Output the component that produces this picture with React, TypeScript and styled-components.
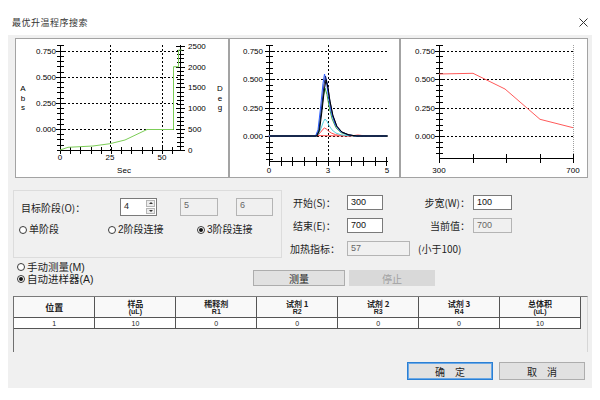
import React from 'react';
import styled, { createGlobalStyle } from 'styled-components';

const GlobalStyle = createGlobalStyle`
  html, body {
    margin: 0;
    padding: 0;
    background: #fff;
  }
  body {
    font-family: "Noto Sans CJK SC", "Liberation Sans", sans-serif;
    color: #1e1e1e;
  }
`;

const Window = styled.div`
    width: 600px;
    height: 400px;
    background: #fff;
    overflow: hidden;
`;

const TitleBar = styled.div`
    height: 35px;
    box-sizing: border-box;
    padding: 10px 12px 0 12px;
    display: flex;
    align-items: center;
    justify-content: space-between;
`;

const Title = styled.span`
    font-size: 9px;
    letter-spacing: 0.5px;
    color: #333;
`;

const Body = styled.div`
    margin: 0 8px;
    height: 353px;
    box-sizing: border-box;
    padding: 3px 4px 0 5px;
    background: #f0f0f0;
    display: flex;
    flex-direction: column;
`;

const ChartRow = styled.div`
    display: flex;
    margin-left: 2px;
    height: 140px;
`;

const Panel = styled.div<{ $w: number }>`
    width: ${p => p.$w}px;
    height: 140px;
    box-sizing: border-box;
    border: 1px solid #a3a3a3;
    background: #fff;
    svg { display: block; }
`;

const TopRow = styled.div`
    display: flex;
`;

const GroupBox = styled.div`
    margin-top: 12px;
    width: 269px;
    height: 68px;
    box-sizing: border-box;
    border: 1px solid #dcdcdc;
    padding: 7px 0 0 6px;
`;

const FieldRow = styled.div`
    display: flex;
    align-items: center;
    height: 18px;
`;

const Label = styled.span<{ $w?: number; $right?: boolean; $pad?: number }>`
    font-size: 10px;
    white-space: nowrap;
    ${p => p.$w ? `width: ${p.$w}px; flex: none;` : ''}
    ${p => p.$right ? 'text-align: right;' : ''}
    padding-left: ${p => p.$pad || 0}px;
    box-sizing: border-box;
`;

const SpinBox = styled.div`
    display: flex;
    width: 37px;
    height: 18px;
    box-sizing: border-box;
    border: 1px solid #7a7a7a;
    background: #fff;
`;

const SpinValue = styled.span`
    flex: 1;
    font: 9px "Liberation Sans", sans-serif;
    padding: 2px 0 0 3px;
`;

const SpinButtons = styled.div`
    width: 9px;
    display: flex;
    flex-direction: column;
    gap: 1px;
    padding: 1px 1px 1px 0;
`;

const SpinArrow = styled.div<{ $down?: boolean }>`
    flex: 1;
    display: flex;
    align-items: center;
    justify-content: center;
    background: #ececec;
    border: 1px solid #b5b5b5;
    &::after {
        content: '';
        border-left: 2px solid transparent;
        border-right: 2px solid transparent;
        ${p => p.$down ? 'border-top: 2px solid #333;' : 'border-bottom: 2px solid #333;'}
    }
`;

const Box = styled.div<{ $w: number; $disabled?: boolean; $h?: number }>`
    width: ${p => p.$w}px;
    height: ${p => p.$h || 15}px;
    flex: none;
    box-sizing: border-box;
    border: 1px solid ${p => p.$disabled ? '#b4b4b4' : '#7a7a7a'};
    background: ${p => p.$disabled ? '#f0f0f0' : '#fff'};
    color: ${p => p.$disabled ? '#666' : '#111'};
    font: 9px "Liberation Sans", sans-serif;
    padding: 1px 0 0 3px;
`;

const RadioRow = styled.div`
    display: flex;
    margin-top: 8px;
    margin-left: -1px;
`;

const RadioItem = styled.label<{ $w?: number; $size?: number }>`
    display: flex;
    align-items: center;
    gap: 2px;
    font-family: "Liberation Sans", "Noto Sans CJK SC", sans-serif;
    font-size: ${p => p.$size || 10}px;
    line-height: 12px;
    height: 12px;
    ${p => p.$w ? `width: ${p.$w}px;` : ''}
    white-space: nowrap;
`;

const RadioCircle = styled.span<{ $checked?: boolean }>`
    width: 8px;
    height: 8px;
    box-sizing: border-box;
    border: 1px solid #3a3a3a;
    border-radius: 50%;
    background: #fff;
    display: inline-flex;
    align-items: center;
    justify-content: center;
    &::after {
        content: '';
        display: ${p => p.$checked ? 'block' : 'none'};
        width: 4px;
        height: 4px;
        border-radius: 50%;
        background: #111;
    }
`;

const RightForm = styled.div`
    margin-left: 8px;
    padding-top: 17px;
    display: flex;
    flex-direction: column;
    gap: 8px;
`;

const FormRow = styled.div`
    display: flex;
    align-items: center;
    height: 15px;
`;

const LowerRow = styled.div`
    display: flex;
    align-items: flex-start;
`;

const ModeColumn = styled.div`
    width: 240px;
    padding: 3px 0 0 4px;
    box-sizing: border-box;
    display: flex;
    flex-direction: column;
`;

const ActionButtons = styled.div`
    margin-top: 12px;
    display: flex;
    gap: 4px;
`;

const Button = styled.div<{ $w: number; $h?: number; $disabled?: boolean; $focused?: boolean; $spread?: boolean }>`
    width: ${p => p.$w}px;
    height: ${p => p.$h || 16}px;
    box-sizing: border-box;
    display: flex;
    align-items: center;
    justify-content: center;
    font-size: 10px;
    white-space: pre;
    ${p => p.$spread ? 'letter-spacing: 4px; padding-left: 4px;' : ''}
    background: ${p => p.$disabled ? '#d9d9d9' : '#e1e1e1'};
    color: ${p => p.$disabled ? '#a0a0a0' : '#1e1e1e'};
    border: 1px solid ${p => p.$focused ? '#2a7fd4' : p.$disabled ? '#d9d9d9' : '#adadad'};
    ${p => p.$focused ? 'box-shadow: inset 0 0 0 1px #6aa8e6;' : ''}
`;

const GridBox = styled.div`
    margin-top: 10px;
    height: 56px;
    box-sizing: border-box;
    border-left: 1px solid #6f6f6f;
    border-top: 1px solid #7a7a7a;
    border-right: 1px solid #d6d6d6;
`;

const Table = styled.table`
    border-collapse: collapse;
    table-layout: fixed;
    width: 567px;
`;

const HeadCell = styled.th`
    height: 20px;
    padding: 0;
    border: 1px solid #555;
    border-top: none;
    background: #f9f9f9;
    font-weight: bold;
    text-align: center;
    vertical-align: middle;
    &:first-child { border-left: none; }
`;

const HeadMain = styled.div<{ $big?: boolean }>`
    font-size: ${p => p.$big ? 9 : 8}px;
    line-height: 9px;
    color: #222;
`;

const HeadSub = styled.div`
    font: bold 7px "Liberation Sans", sans-serif;
    line-height: 8px;
    color: #222;
`;

const DataCell = styled.td`
    height: 10px;
    padding: 0;
    border: 1px solid #555;
    background: #fff;
    text-align: center;
    font: 7px "Liberation Sans", sans-serif;
    line-height: 9px;
    color: #222;
    &:first-child { border-left: none; }
`;

const BottomBar = styled.div`
    flex: 1;
    display: flex;
    justify-content: flex-end;
    align-items: flex-start;
    gap: 6px;
    padding: 10px 3px 0 0;
`;

const c = (v: number) => Math.round(v) + 0.5;

function yTicks(x: number, first: number, step: number, top: number, bottom: number) {
    const out: React.ReactNode[] = [];
    const k0 = Math.ceil((top - first) / step - 0.01);
    for (let i = k0; first + i * step <= bottom + 0.01; i++) {
        const y = c(first + i * step);
        const l = ((i % 5) + 5) % 5 === 0 ? 4 : 3;
        out.push(<line key={'y' + i} x1={x - l} x2={x + l + 1} y1={y} y2={y} />);
    }
    return out;
}

function xTicks(y: number, first: number, step: number, right: number, len = 3) {
    const out: React.ReactNode[] = [];
    for (let i = 0; first + i * step <= right + 0.01; i++) {
        const x = c(first + i * step);
        out.push(<line key={'x' + i} x1={x} x2={x} y1={y - len} y2={y + len + 1} />);
    }
    return out;
}

const AXIS_FONT = { fontFamily: '"Liberation Sans", sans-serif', fontSize: 8, fill: '#000' };

function Gridlines({ ys, xs, left, right, top, bottom }: { ys: number[]; xs: number[]; left: number; right: number; top: number; bottom: number }) {
    return (
        <g stroke="#000" strokeDasharray="2,2" strokeWidth={1}>
            {ys.map(y => <line key={'h' + y} x1={left} x2={right} y1={c(y)} y2={c(y)} />)}
            {xs.map(x => <line key={'v' + x} x1={c(x)} x2={c(x)} y1={top} y2={bottom} />)}
        </g>
    );
}

const absLabels = ['0.750', '0.500', '0.250', '0.000'];

function HeatChart() {
    const ys = [11.7, 37.8, 63.9, 90];
    const right = ['2500', '2000', '1500', '1000', '500', '0'];
    const green = [[44, 111], [52, 108.3], [77, 107], [94, 104.7], [109, 101], [131, 90.5], [157.5, 90.5], [157.5, 27.7], [162.5, 27.7], [162.5, 11], [166, 11]];
    return (
        <svg width={212} height={138}>
            <Gridlines ys={ys} xs={[94, 146]} left={44} right={164} top={6} bottom={111} />
            <g stroke="#000" strokeWidth={1}>
                <line x1={44.5} x2={44.5} y1={6} y2={112} />
                <line x1={164.5} x2={164.5} y1={6} y2={112} />
                <line x1={44} x2={165} y1={111.5} y2={111.5} />
                {yTicks(44, 11.7, 5.22, 6, 111)}
                {yTicks(164, 6.7, 4.17, 6, 111)}
                {xTicks(111, 44, 10.2, 164)}
            </g>
            <polyline points={green.map(p => p.join(',')).join(' ')} fill="none" stroke="#7ccd57" strokeWidth={1} />
            {absLabels.map((t, i) => <text key={t} x={40} y={ys[i] + 3} textAnchor="end" {...AXIS_FONT}>{t}</text>)}
            {right.map((t, i) => <text key={t} x={172} y={6.7 + i * 20.86 + 3} {...AXIS_FONT}>{t}</text>)}
            {['A', 'b', 's'].map((t, i) => <text key={t} x={7} y={52 + i * 9.5} textAnchor="middle" {...AXIS_FONT}>{t}</text>)}
            {['D', 'e', 'g'].map((t, i) => <text key={t} x={204} y={52 + i * 9.5} textAnchor="middle" {...AXIS_FONT}>{t}</text>)}
            <text x={44} y={121} textAnchor="middle" {...AXIS_FONT}>0</text>
            <text x={94} y={121} textAnchor="middle" {...AXIS_FONT}>25</text>
            <text x={146} y={121} textAnchor="middle" {...AXIS_FONT}>50</text>
            <text x={108} y={134} textAnchor="middle" {...AXIS_FONT}>Sec</text>
        </svg>
    );
}

function peak(h: number, shift = 0) {
    const b = 97;
    const pts: number[][] = [
        [39, b], [86, b], [88.5, b - h * 0.1], [91, b - h * 0.45], [93.5, b - h * 0.85], [95, b - h],
        [97, b - h * 0.86], [99, b - h * 0.62], [102, b - h * 0.36], [106, b - h * 0.17], [111, b - h * 0.07],
        [118, b - h * 0.02], [126, b], [157, b],
    ];
    return pts.map(([x, y]) => `${x + shift},${y}`).join(' ');
}

const peaks = [
    { color: '#ff4b4b', h: 8, s: -0.5 },
    { color: '#53d3e0', h: 17, s: 0 },
    { color: '#3fae3f', h: 48, s: 0 },
    { color: '#2a5cff', h: 62, s: -0.5 },
    { color: '#10207a', h: 60, s: 0.5 },
    { color: '#000000', h: 56, s: 1 },
];

function PeakChart() {
    const ys = [11.7, 40.1, 68.5, 97];
    return (
        <svg width={169} height={138}>
            <Gridlines ys={ys} xs={[98]} left={39} right={157} top={6} bottom={122} />
            <g stroke="#000" strokeWidth={1}>
                <line x1={39.5} x2={39.5} y1={6} y2={123} />
                <line x1={39} x2={158} y1={122.5} y2={122.5} />
                {yTicks(39, 11.7, 5.68, 6, 122)}
                {xTicks(122, 39, 11.74, 157, 4)}
            </g>
            <polyline points="39,97 60,97.5 80,96.5 120,97 128,96 140,97.5 150,96.5 157,97" fill="none" stroke="#ff4b4b" strokeWidth={1} />
            {peaks.map(p => (
                <polyline key={p.color} points={peak(p.h, p.s)} fill="none" stroke={p.color} strokeWidth={1} />
            ))}
            {absLabels.map((t, i) => <text key={t} x={33} y={ys[i] + 3} textAnchor="end" {...AXIS_FONT}>{t}</text>)}
            <text x={39} y={134} textAnchor="middle" {...AXIS_FONT}>0</text>
            <text x={98} y={134} textAnchor="middle" {...AXIS_FONT}>3</text>
            <text x={157} y={134} textAnchor="middle" {...AXIS_FONT}>5</text>
        </svg>
    );
}

function IndexChart() {
    const ys = [11.7, 40.1, 68.5, 97];
    const red = [[38, 35], [72, 34.3], [104, 50], [139, 80.3], [172, 88.7]];
    return (
        <svg width={186} height={138}>
            <Gridlines ys={ys} xs={[]} left={38} right={172} top={6} bottom={119} />
            <line x1={172.5} x2={172.5} y1={6} y2={120} stroke="#a0a0a0" strokeDasharray="1,1" />
            <g stroke="#000" strokeWidth={1}>
                <line x1={38.5} x2={38.5} y1={6} y2={120} />
                <line x1={38} x2={173} y1={119.5} y2={119.5} />
                {yTicks(38, 11.7, 5.68, 6, 119)}
                {xTicks(119, 38, 33.5, 172, 4)}
            </g>
            <polyline points={red.map(p => p.join(',')).join(' ')} fill="none" stroke="#ff5a5a" strokeWidth={1} />
            {absLabels.map((t, i) => <text key={t} x={34} y={ys[i] + 3} textAnchor="end" {...AXIS_FONT}>{t}</text>)}
            <text x={38} y={134} textAnchor="middle" {...AXIS_FONT}>300</text>
            <text x={172} y={134} textAnchor="middle" {...AXIS_FONT}>700</text>
        </svg>
    );
}

const columns = [
    { main: '位置', sub: '' },
    { main: '样品', sub: '(uL)' },
    { main: '稀释剂', sub: 'R1' },
    { main: '试剂 1', sub: 'R2' },
    { main: '试剂 2', sub: 'R3' },
    { main: '试剂 3', sub: 'R4' },
    { main: '总体积', sub: '(uL)' },
];

const rows = [['1', '10', '0', '0', '0', '0', '10']];

export default function App() {
    return (
        <Window>
            <GlobalStyle />
            <TitleBar>
                <Title>最优升温程序搜索</Title>
                <svg width={9} height={9} viewBox="0 0 9 9">
                    <path d="M0.5 0.5 L8.5 8.5 M8.5 0.5 L0.5 8.5" stroke="#333" strokeWidth={1} fill="none" />
                </svg>
            </TitleBar>
            <Body>
                <ChartRow>
                    <Panel $w={214}><HeatChart /></Panel>
                    <Panel $w={171}><PeakChart /></Panel>
                    <Panel $w={188}><IndexChart /></Panel>
                </ChartRow>

                <TopRow>
                    <GroupBox>
                        <FieldRow>
                            <Label $w={100} $pad={1}>目标阶段(O)：</Label>
                            <SpinBox>
                                <SpinValue>4</SpinValue>
                                <SpinButtons>
                                    <SpinArrow />
                                    <SpinArrow $down />
                                </SpinButtons>
                            </SpinBox>
                            <Box $w={38} $h={18} $disabled style={{ marginLeft: 23 }}>5</Box>
                            <Box $w={37} $h={18} $disabled style={{ marginLeft: 18 }}>6</Box>
                        </FieldRow>
                        <RadioRow>
                            <RadioItem $w={89}><RadioCircle />单阶段</RadioItem>
                            <RadioItem $w={89}><RadioCircle />2阶段连接</RadioItem>
                            <RadioItem><RadioCircle $checked />3阶段连接</RadioItem>
                        </RadioRow>
                    </GroupBox>

                    <RightForm>
                        <FormRow>
                            <Label $w={57} $pad={3}>开始(S)：</Label>
                            <Box $w={36}>300</Box>
                            <Label $w={87} $right>步宽(W)：</Label>
                            <Box $w={39} style={{ marginLeft: 3 }}>100</Box>
                        </FormRow>
                        <FormRow>
                            <Label $w={57} $pad={3}>结束(E)：</Label>
                            <Box $w={36}>700</Box>
                            <Label $w={87} $right>当前值：</Label>
                            <Box $w={39} $disabled style={{ marginLeft: 3 }}>700</Box>
                        </FormRow>
                        <FormRow>
                            <Label $w={57}>加热指标：</Label>
                            <Box $w={63} $disabled>57</Box>
                            <Label $pad={8}>(小于100)</Label>
                        </FormRow>
                    </RightForm>
                </TopRow>

                <LowerRow>
                    <ModeColumn>
                        <RadioItem $size={10.5}><RadioCircle />手动测量(M)</RadioItem>
                        <RadioItem $size={10.5}><RadioCircle $checked />自动进样器(A)</RadioItem>
                    </ModeColumn>
                    <ActionButtons>
                        <Button $w={92}>测量</Button>
                        <Button $w={86} $disabled>停止</Button>
                    </ActionButtons>
                </LowerRow>

                <GridBox>
                    <Table>
                        <thead>
                            <tr>
                                {columns.map(col => (
                                    <HeadCell key={col.main}>
                                        <HeadMain $big={!col.sub}>{col.main}</HeadMain>
                                        {col.sub && <HeadSub>{col.sub}</HeadSub>}
                                    </HeadCell>
                                ))}
                            </tr>
                        </thead>
                        <tbody>
                            {rows.map((r, i) => (
                                <tr key={i}>
                                    {r.map((v, j) => <DataCell key={j}>{v}</DataCell>)}
                                </tr>
                            ))}
                        </tbody>
                    </Table>
                </GridBox>

                <BottomBar>
                    <Button $w={86} $h={18} $focused $spread>确 定</Button>
                    <Button $w={86} $h={18} $spread>取 消</Button>
                </BottomBar>
            </Body>
        </Window>
    );
}
